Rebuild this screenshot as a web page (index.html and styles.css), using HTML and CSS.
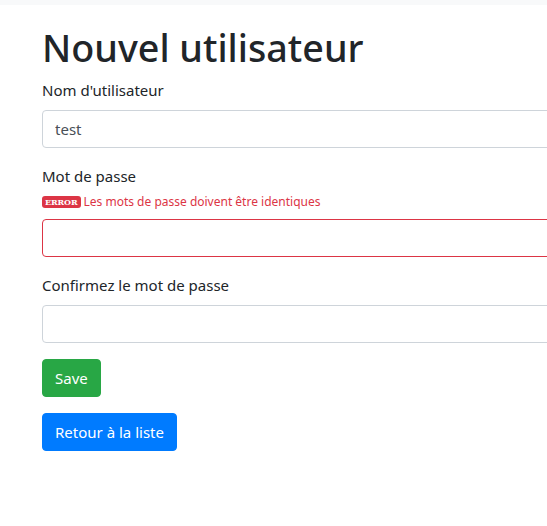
FILE: index.html
```html
<!DOCTYPE html>
<html lang="fr">
<head>
<meta charset="utf-8">
<title>Nouvel utilisateur</title>
<link rel="stylesheet" href="styles.css">
</head>
<body>
<div class="topbar"></div>
<main class="container">
  <h1 class="title">Nouvel utilisateur</h1>
  <form class="form">
    <div class="form-group">
      <label class="label" for="username">Nom d'utilisateur</label>
      <input class="input" id="username" type="text" value="test">
    </div>
    <div class="form-group">
      <label class="label label-tight" for="password">Mot de passe</label>
      <div class="error-line"><span class="badge">ERROR</span><span class="error-text">Les mots de passe doivent être identiques</span></div>
      <input class="input input-invalid" id="password" type="password">
    </div>
    <div class="form-group">
      <label class="label" for="confirm">Confirmez le mot de passe</label>
      <input class="input" id="confirm" type="password">
    </div>
    <div class="form-group">
      <button class="btn btn-success" type="button">Save</button>
    </div>
    <div class="form-group">
      <button class="btn btn-primary" type="button">Retour à la liste</button>
    </div>
  </form>
</main>
</body>
</html>
```
FILE: styles.css
```css
html, body {
  margin: 0;
  padding: 0;
  overflow: hidden;
  background: #fff;
}
body {
  font-family: "Noto Sans", "Open Sans", sans-serif;
  font-size: 15px;
  line-height: 24px;
  color: #212529;
}
.topbar {
  height: 5px;
  background: #f8f9fa;
}
.container {
  padding: 0 0 0 42px;
  width: 620px;
}
.title {
  margin: 19px 0 6px;
  font-size: 37.7px;
  line-height: 48px;
  font-weight: 500;
  height: 48px;
}
.form-group {
  margin-bottom: 16px;
}
.label {
  display: block;
  margin-bottom: 8px;
  height: 24px;
}
.label-tight {
  margin-bottom: 4px;
}
.error-line {
  display: flex;
  align-items: center;
  height: 20px;
  margin-bottom: 7px;
}
.badge {
  display: inline-block;
  background: #dc3545;
  color: #fff;
  font-family: "DejaVu Serif", serif;
  font-weight: bold;
  font-size: 8px;
  line-height: 12px;
  padding: 0 3px;
  border-radius: 3px;
  margin-right: 3px;
  letter-spacing: -0.1px;
}
.error-text {
  color: #dc3545;
  font-size: 12px;
}
.input {
  display: block;
  box-sizing: border-box;
  width: 100%;
  height: 38px;
  padding: 6px 12px;
  font: inherit;
  color: #495057;
  border: 1px solid #ced4da;
  border-radius: 4px;
  background: #fff;
  margin: 0;
}
.input-invalid {
  border-color: #dc3545;
}
.btn {
  display: inline-block;
  height: 38px;
  padding: 0 12px;
  font: inherit;
  color: #fff;
  border: 1px solid transparent;
  border-radius: 4px;
  cursor: pointer;
}
.btn-success {
  background: #28a745;
  border-color: #28a745;
}
.btn-primary {
  background: #007bff;
  border-color: #007bff;
}
```
